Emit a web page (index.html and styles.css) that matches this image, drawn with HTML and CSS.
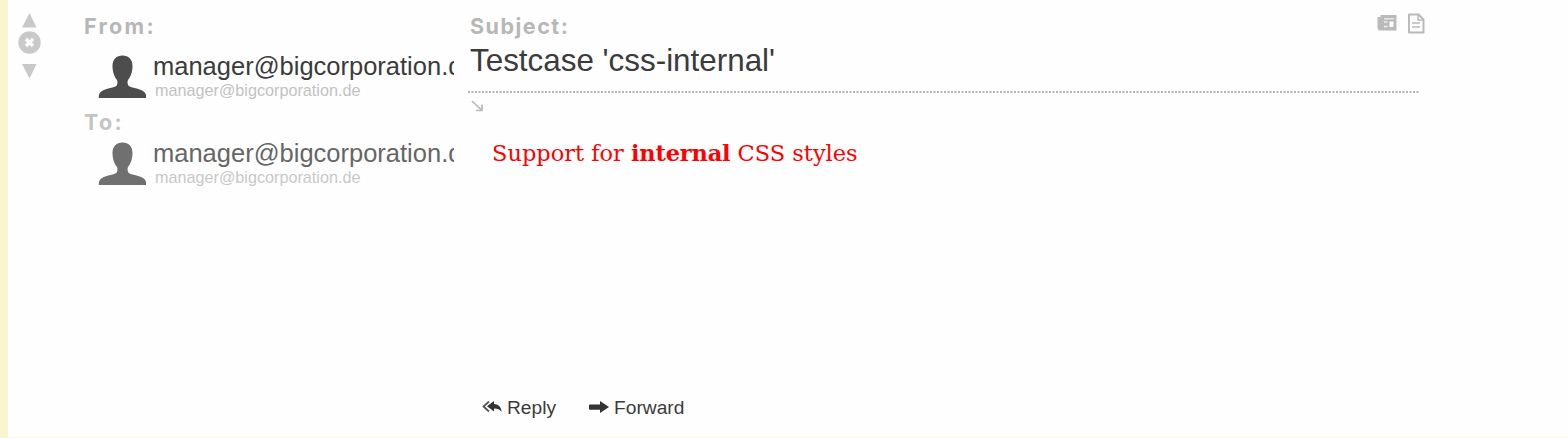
FILE: index.html
```html
<!DOCTYPE html>
<html lang="en">
<head>
<meta charset="utf-8">
<title>Testcase 'css-internal'</title>
<link rel="stylesheet" href="styles.css">
</head>
<body>
<article class="message">
  <nav class="controls">
    <svg width="24" height="72" viewBox="0 0 24 72" fill="#c9c9c9">
      <path d="M11.500 0 18.500 14.500H4z"/>
      <circle cx="11.500" cy="29.500" r="11.200"/>
      <path d="M8 26l7 7M15 26l-7 7" stroke="#fff" stroke-width="3.200"/>
      <path d="M4 51h14.500L11.500 65.500z"/>
    </svg>
  </nav>
  <aside class="people">
    <h2 class="label label-person">From:</h2>
    <div class="person">
      <svg class="avatar" width="48" height="44" viewBox="0 0 48 44"><path d="M24.500 .5c6 0 10 4 10 10.500 0 6-2 11-4.500 14-.8 1.500-.5 4 .3 5.500 2 2.500 10 2.500 14.700 5.500 3 2 3.200 4 3.200 7H.8c0-3 .2-5 3.200-7 4.700-3 12.700-3 14.700-5.500.8-1.500 1.100-4 .3-5.500-2.500-3-4.500-8-4.500-14C14.500 4.500 18.500 .5 24.500 .5z"/></svg>
      <div class="who"><div class="name">manager@bigcorporation.de</div><div class="address">manager@bigcorporation.de</div></div>
    </div>
    <h2 class="label label-person label-to">To:</h2>
    <div class="person person-to">
      <svg class="avatar" width="48" height="44" viewBox="0 0 48 44"><path d="M24.500 .5c6 0 10 4 10 10.500 0 6-2 11-4.500 14-.8 1.500-.5 4 .3 5.500 2 2.500 10 2.500 14.700 5.500 3 2 3.200 4 3.200 7H.8c0-3 .2-5 3.200-7 4.700-3 12.700-3 14.700-5.500.8-1.500 1.100-4 .3-5.500-2.500-3-4.500-8-4.500-14C14.500 4.500 18.500 .5 24.500 .5z"/></svg>
      <div class="who"><div class="name">manager@bigcorporation.de</div><div class="address">manager@bigcorporation.de</div></div>
    </div>
  </aside>
  <main class="content">
    <header class="heading">
      <div>
        <h2 class="label label-subject">Subject:</h2>
        <h1 class="subject">Testcase 'css-internal'</h1>
      </div>
      <svg class="views" width="50" height="22" viewBox="0 0 50 22" fill="none" stroke="#bababa">
        <path d="M5.500 3h14v13.500H4Q2.500 16.500 2.500 14V5h3z" fill="#bababa" stroke-width="2"/>
        <path d="M8 5.800h10" stroke="#eee" stroke-width="1.300"/>
        <path d="M8 9h3.500M8 13.500h3.500" stroke="#eee" stroke-width="1.300"/>
        <path d="M13.500 8.500h4v5.500h-4z" fill="#fefefe" stroke="none"/>
        <path d="M33 1.500h9.500l5 5V19.500H33z" stroke-width="2" stroke-linejoin="round"/>
        <path d="M42 2v5h5.500" stroke-width="1.500"/>
        <path d="M36 10h8M36 14h8" stroke-width="1.500"/>
      </svg>
    </header>
    <svg class="rule" width="951" height="2"><path d="M0 1h951" stroke="#b4b4b4" stroke-width="2" stroke-dasharray="2 1.500"/></svg>
    <svg class="expand" width="14" height="13" viewBox="0 0 14 13"><path d="M1 1l9.500 9M11 4.500V10.500H5" fill="none" stroke="#b9b9b9" stroke-width="1.700"/></svg>
    <p class="body">Support for <b>internal</b> CSS styles</p>
    <footer class="actions">
      <span class="action"><svg width="20" height="14" viewBox="0 0 20 14" fill="#333"><path d="M12 0v3c5 .3 7.500 3.500 7.500 8-1.500-2.500-3.500-3.500-7.500-3.500v3L5 5.300z"/><path d="M7 .5L1.500 5.500 7 10.500" fill="none" stroke="#555" stroke-width="1.800"/></svg>Reply</span>
      <span class="action"><svg width="20" height="14" viewBox="0 0 20 14" fill="#333"><path d="M0 4.500Q0 3.500 1 3.500h10V0l9 6-9 6V8.800H1q-1 0-1-1z"/></svg>Forward</span>
    </footer>
  </main>
</article>
</body>
</html>
```
FILE: styles.css
```css
* { box-sizing: border-box; margin: 0; padding: 0; }
body { background: #fefefe; color: #3b3b3b; font-family: "Liberation Sans", Arial, sans-serif; }
svg { display: block; flex: none; }
.message { display: flex; height: 438px; overflow: hidden; border-left: 8px solid #f9f5cf; box-shadow: inset 0 -1px #fafae0; }
.controls { width: 76px; padding: 13px 0 0 10px; }
.people { width: 370px; padding-top: 14px; }
.label { height: 26px; color: #b7b7b7; font: 700 21.5px/25px Inter, sans-serif; letter-spacing: 1.5px; }
.label-person { letter-spacing: 2.3px; }
.label-to { margin-top: 10px; color: #c4c4c4; }
.person { display: flex; height: 60px; padding: 15px 0 0 14px; }
.person-to { padding-top: 6px; }
.avatar { fill: #4d4d4d; }
.person-to .avatar { fill: #707070; }
.who { width: 301px; margin: -2px 0 0 7px; overflow: hidden; white-space: nowrap; }
.name { height: 28px; font-size: 25.5px; line-height: 26px; }
.address { padding-left: 2px; color: #c2c2c2; font-size: 16.2px; line-height: 19px; }
.person-to .name { color: #666; }
.person-to .address { color: #c8c8c8; }
.content { width: 971px; padding: 14px 0 17px 14px; display: flex; flex-direction: column; }
.heading { display: flex; justify-content: space-between; height: 77px; }
.label-subject { padding-left: 2px; }
.subject { padding-left: 2px; font-size: 31.4px; font-weight: 400; line-height: 42px; }
.views { margin: -1px -1px 0 0; }
.rule { margin-top: -.5px; }
.expand { margin: 7.5px 0 0 3px; }
.body { margin: 25px 0 0 24px; color: #f00; font: 22.5px/30px "DejaVu Serif", serif; white-space: nowrap; }
.body b { letter-spacing: -.2px; }
.actions { display: flex; gap: 33px; margin-top: auto; padding-left: 14px; }
.action { display: flex; align-items: center; gap: 5px; font-size: 19.2px; line-height: 26px; }
```
